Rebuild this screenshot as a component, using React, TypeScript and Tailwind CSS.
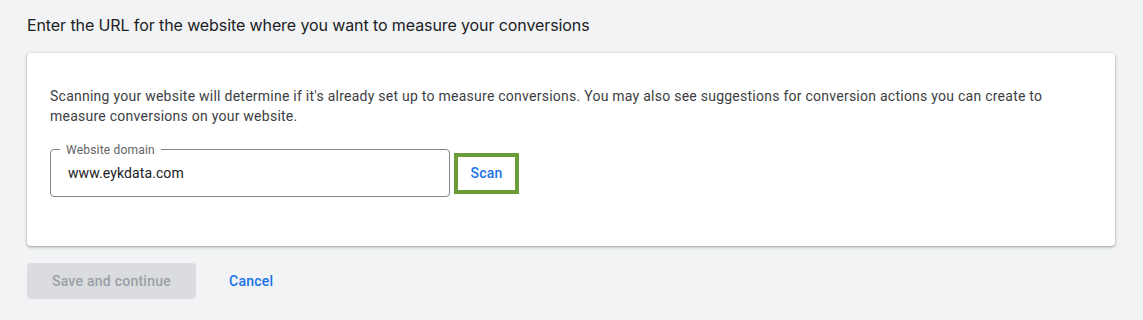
import React from 'react';

const App: React.FC = () => {
  return (
    <div className="min-h-[320px] w-full bg-[#f1f3f4] px-[27px] pt-[15px] font-['Roboto',sans-serif]">
      <h2 className="text-[16px] leading-[20px] tracking-[-0.1px] text-[#202124] font-['Inter',sans-serif]">
        Enter the URL for the website where you want to measure your conversions
      </h2>

      <div className="mt-[18px] w-[1088px] h-[193px] rounded-[4px] bg-white shadow-[0_1px_2px_rgba(60,64,67,0.3),0_1px_3px_1px_rgba(60,64,67,0.15)] px-[23px] pt-[33px]">
        <p className="text-[14px] leading-[20px] text-[#3c4043] tracking-[0.25px]">
          Scanning your website will determine if it's already set up to measure conversions. You may also see suggestions for conversion actions you can create to measure conversions on your website.
        </p>

        <div className="mt-[23px] flex items-center gap-[4px]">
          <div className="relative w-[400px] h-[48px] rounded-[4px] border border-[#80868b] flex items-center pl-[17px] pr-[15px]">
            <span className="absolute -top-[8px] left-[9px] bg-white px-[6px] text-[12px] leading-[16px] text-[#5f6368] tracking-[0.2px]">
              Website domain
            </span>
            <span className="text-[14px] text-[#202124] pt-[1px] tracking-[0.1px]">www.eykdata.com</span>
          </div>
          <div className="w-[65px] h-[41px] border-[4px] border-[#6a9c37] flex items-center justify-center">
            <span className="text-[14px] font-medium text-[#1a73e8] tracking-[0.25px]">Scan</span>
          </div>
        </div>
      </div>

      <div className="mt-[17px] flex items-center gap-[33px]">
        <button className="w-[169px] h-[36px] rounded-[4px] bg-[#dadce0] text-[14px] font-medium text-[#9aa0a6] tracking-[0.25px]">
          Save and continue
        </button>
        <button className="text-[14px] font-medium text-[#1a73e8] tracking-[0.25px]">Cancel</button>
      </div>
    </div>
  );
};

export default App;
